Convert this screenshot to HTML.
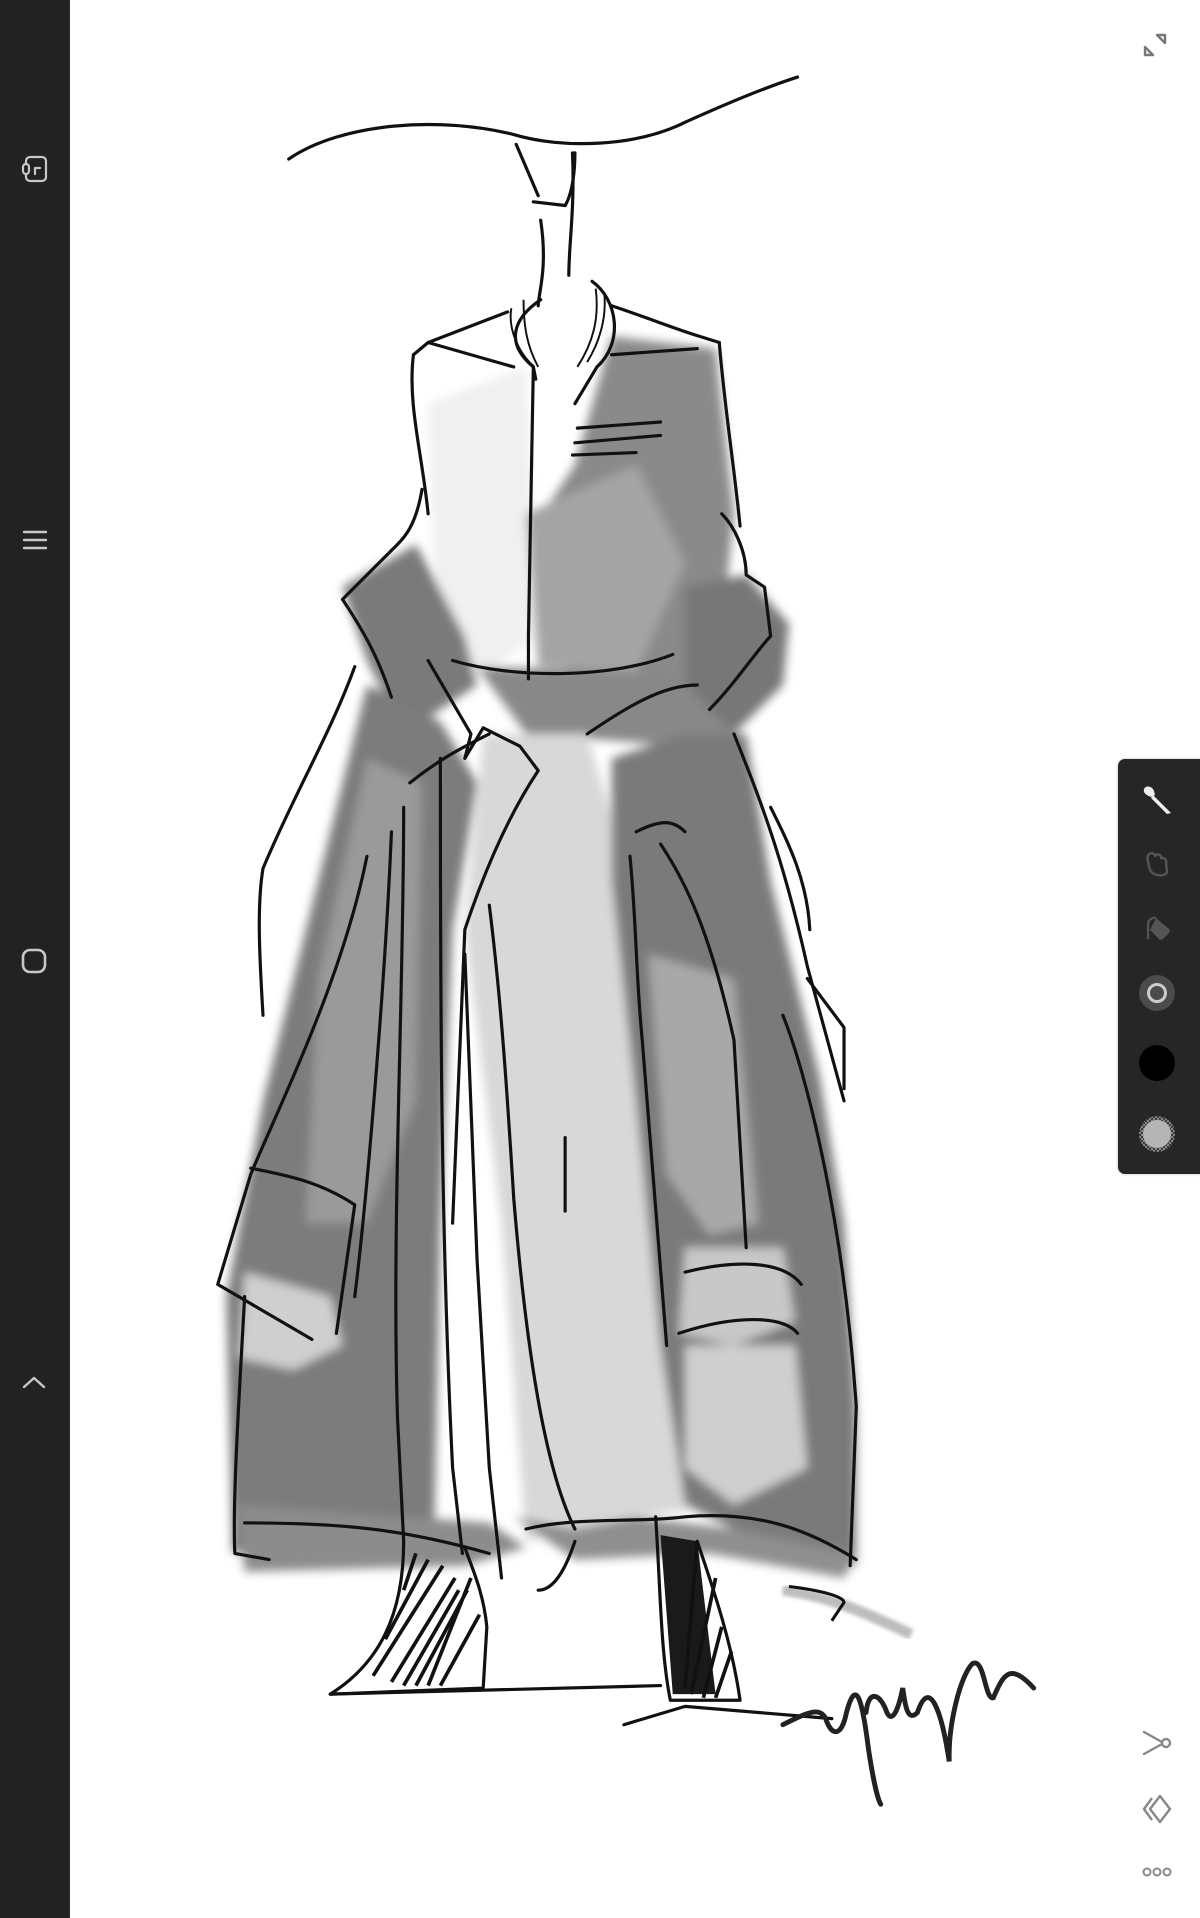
<!DOCTYPE html>
<html><head><meta charset="utf-8">
<style>
html,body{margin:0;padding:0;background:#fff;}
body{width:1200px;height:1918px;position:relative;overflow:hidden;font-family:"Liberation Sans",sans-serif;}
#side{position:absolute;left:0;top:0;width:69px;height:1918px;background:#222222;border-right:1px solid #2c2c2c;}
#art{position:absolute;left:0;top:0;width:1200px;height:1918px;}
#tb{position:absolute;left:1118px;top:759px;width:82px;height:415px;background:#262626;border-radius:7px 0 0 7px;box-shadow:0 0 3px rgba(0,0,0,.25);}
.ic{position:absolute;}
</style></head><body>
<svg id="art" viewBox="0 0 981 1568" preserveAspectRatio="none">
<defs><filter id="b"><feGaussianBlur stdDeviation="4"/></filter><filter id="b2"><feGaussianBlur stdDeviation="1.5"/></filter></defs>
<g filter="url(#b)">
<path d="M500,275 L585,285 L600,420 L590,520 L560,560 L470,555 L440,520 L430,440 L470,380 Z" fill="#8a8a8a"/>
<path d="M350,330 L430,300 L440,520 L390,555 L355,470 Z" fill="#f0f0f0"/>
<path d="M430,420 L520,380 L560,460 L520,550 L440,545 Z" fill="#a4a4a4"/>
<path d="M280,480 L340,445 L380,520 L390,560 L330,600 L300,540 Z" fill="#7a7a7a"/>
<path d="M560,480 L610,470 L645,510 L640,560 L600,600 L560,560 Z" fill="#777"/>
<path d="M390,545 L550,550 L600,600 L560,610 L430,600 Z" fill="#888"/>
<path d="M300,560 L360,590 L390,640 L370,760 L360,1000 L355,1250 L300,1255 L190,1270 L185,1060 L215,900 L260,720 Z" fill="#7c7c7c"/>
<path d="M300,620 L345,640 L340,900 L300,1000 L250,1000 L260,800 Z" fill="#9a9a9a"/>
<path d="M200,1040 L270,1060 L280,1100 L240,1120 L195,1110 Z" fill="#cfcfcf"/>
<path d="M395,600 L480,600 L510,700 L530,900 L560,1100 L600,1230 L520,1240 L430,1260 L410,1000 L380,760 Z" fill="#d8d8d8"/>
<path d="M500,620 L560,600 L610,600 L630,720 L670,880 L690,1000 L700,1150 L700,1280 L620,1260 L560,1230 L540,1100 L520,900 L500,720 Z" fill="#7a7a7a"/>
<path d="M530,780 L600,800 L620,1000 L580,1010 L545,960 Z" fill="#a8a8a8"/>
<path d="M560,1020 L640,1020 L650,1080 L600,1100 L555,1090 Z" fill="#c8c8c8"/>
<path d="M560,1100 L650,1100 L660,1200 L600,1230 L560,1200 Z" fill="#cfcfcf"/>
<path d="M195,1230 L400,1245 L430,1265 L380,1280 L200,1285 Z" fill="#8c8c8c"/>
<path d="M420,1240 L470,1250 L520,1240 L600,1250 L700,1270 L690,1290 L580,1270 L470,1275 Z" fill="#8f8f8f"/>
</g>
<g filter="url(#b2)"><path d="M640,1300 C680,1305 710,1320 745,1336" stroke="#bdbdbd" stroke-width="9" fill="none"/></g>
<g fill="none" stroke="#111" stroke-width="2.6" stroke-linecap="round" stroke-linejoin="round">
<path d="M236,130 C280,100 360,95 420,110 C460,122 520,120 560,100 C600,82 630,70 652,63"/>
<path d="M422,118 L440,160 M436,165 L462,168 C468,158 470,140 470,125"/>
<path d="M442,180 C448,220 440,240 440,250 M468,125 C470,170 465,200 465,225"/>
<path d="M442,245 C420,260 412,280 436,300 L438,310 M484,230 C505,245 510,280 488,300 L470,330"/>
<path d="M415,255 L350,280 L338,290 M500,250 C530,260 555,270 572,275 L588,280"/>
<path d="M338,290 C333,330 345,370 350,420 M588,280 C592,330 600,380 605,430"/>
<path d="M350,280 L420,300 M500,290 L570,285"/>
<path d="M436,300 L432,520 L432,555"/>
<path d="M472,350 L540,345 M470,362 L540,356 M468,372 L520,370"/>
<path d="M345,400 C340,430 330,440 325,445 L280,490 C300,520 310,540 320,570"/>
<path d="M590,420 C600,430 610,450 610,470 L625,480 L630,520 C620,530 600,560 580,580"/>
<path d="M370,540 C420,555 500,555 550,535"/>
<path d="M350,540 L385,600 L380,620 L395,595 L425,610 L440,630 C420,660 400,700 380,760 L370,1000"/>
<path d="M335,640 C360,620 380,610 400,600"/>
<path d="M480,600 C510,580 540,560 570,560"/>
<path d="M290,545 C270,600 240,650 215,710 C210,740 212,780 215,830"/>
<path d="M300,700 C280,800 230,900 205,960 L178,1050 L255,1095"/>
<path d="M205,955 C230,960 260,965 290,985 L275,1090"/>
<path d="M320,680 C315,800 300,980 290,1060"/>
<path d="M330,660 C330,820 320,1000 325,1160 L330,1260"/>
<path d="M360,620 C360,800 360,1000 370,1200 L378,1270"/>
<path d="M200,1060 C195,1150 190,1230 192,1270 L220,1275"/>
<path d="M400,740 C410,820 415,900 420,980 C430,1100 445,1200 470,1250"/>
<path d="M380,780 L390,1030 L400,1200 L410,1290"/>
<path d="M462,930 L462,990"/>
<path d="M520,680 C540,670 550,670 560,680 M515,700 C520,750 520,800 525,850 L545,1100"/>
<path d="M540,690 C560,720 580,760 600,850 L610,1020"/>
<path d="M600,600 C620,650 640,700 660,790 L690,900 M630,660 C645,690 660,720 662,760"/>
<path d="M560,1040 C600,1030 640,1030 655,1050 M555,1090 C600,1075 640,1075 652,1090"/>
<path d="M640,830 C660,880 690,1000 700,1150 L695,1280"/>
<path d="M660,800 L690,840 L690,890"/>
<path d="M200,1245 C280,1245 330,1250 400,1270"/>
<path d="M430,1250 C470,1240 520,1245 560,1240 C620,1235 660,1250 700,1275"/>
<path d="M330,1260 C330,1320 310,1360 270,1385 L395,1380 L398,1330 C395,1300 385,1280 380,1265"/>
<path d="M536,1240 C540,1300 540,1350 548,1390 L605,1390 C598,1340 580,1290 570,1260"/>
<path d="M270,1385 L540,1378 M510,1410 L560,1395 L680,1405"/>
<path d="M470,1260 C460,1290 450,1300 440,1300"/>
</g>
<g stroke="#111" stroke-width="3" fill="none">
<path d="M340,1270 L330,1300 M350,1275 L315,1340 M362,1280 L305,1370 M372,1290 L320,1375 M382,1300 L340,1378 M392,1320 L360,1378 M385,1290 L350,1378 M375,1300 L330,1378"/>
<path d="M540,1255 L570,1260 L585,1385 L550,1385 Z" fill="#1a1a1a" stroke="none"/>
<path d="M570,1260 L560,1380 M585,1290 L565,1385 M590,1330 L575,1388 M598,1350 L585,1388"/>
<path d="M418,252 C415,270 425,290 437,300 M428,245 C428,270 432,285 440,300 M494,240 C496,260 490,280 480,296 M487,236 C490,260 485,280 472,300" stroke-width="1.6"/>
</g>
<path d="M640,1410 C660,1400 670,1395 675,1405 C680,1420 688,1420 692,1400 C700,1370 705,1390 710,1430 C713,1450 717,1470 720,1475 M708,1400 C710,1380 720,1385 725,1400 C730,1410 735,1395 738,1380 C740,1395 742,1408 750,1400 C760,1370 770,1400 776,1440 C775,1410 785,1370 795,1360 C805,1355 805,1390 812,1388 C820,1370 825,1358 845,1380" stroke="#222" stroke-width="4" fill="none" stroke-linecap="round"/>
<path d="M645,1297 C670,1300 690,1305 690,1310 L680,1325" stroke="#111" stroke-width="2.5" fill="none"/>
</svg>

<div id="side">
<svg class="ic" style="left:20px;top:154px" width="30" height="30" viewBox="0 0 30 30" fill="none" stroke="#c8c8c8" stroke-width="2.2" stroke-linecap="round" stroke-linejoin="round"><rect x="6" y="3" width="20" height="24" rx="4"/><rect x="3" y="10" width="6" height="10" rx="3" fill="#222"/><path d="M15 20 V14 H20"/></svg>
<svg class="ic" style="left:22px;top:528px" width="26" height="24" viewBox="0 0 26 24" stroke="#c8c8c8" stroke-width="2.4" stroke-linecap="round"><path d="M2 4 H24 M2 12 H24 M2 20 H24"/></svg>
<svg class="ic" style="left:20px;top:947px" width="28" height="28" viewBox="0 0 28 28" fill="none" stroke="#c8c8c8" stroke-width="2.6"><rect x="3" y="3" width="22" height="22" rx="7"/></svg>
<svg class="ic" style="left:21px;top:1374px" width="26" height="16" viewBox="0 0 26 16" fill="none" stroke="#c8c8c8" stroke-width="2.4" stroke-linecap="round" stroke-linejoin="round"><path d="M3 13 L13 4 L23 13"/></svg>
</div>

<svg class="ic" style="left:1140px;top:30px" width="30" height="30" viewBox="0 0 30 30" fill="none" stroke="#777" stroke-width="2.4" stroke-linejoin="round"><path d="M17 5 H25 V13 Z"/><path d="M5 17 V25 H13 Z"/></svg>

<div id="tb">
<svg class="ic" style="left:22px;top:24px" width="36" height="36" viewBox="0 0 36 36"><path d="M4 6 C6 2 12 3 14 8 L15 12 L11 14 C6 12 3 10 4 6Z" fill="#eee"/><path d="M13 12 L31 30 L27 31 L11 15 Z" fill="#eee"/></svg>
<svg class="ic" style="left:22px;top:88px" width="36" height="36" viewBox="0 0 36 36" fill="none" stroke="#555" stroke-width="2.4" stroke-linejoin="round"><path d="M9 7 C12 5 15 7 15 9 C17 6 22 8 21 11 C24 10 27 13 26 16 L27 24 C27 28 22 29 17 28 C12 27 10 24 9 20 L8 14 C7 11 7 9 9 7Z"/></svg>
<svg class="ic" style="left:22px;top:152px" width="36" height="36" viewBox="0 0 36 36"><path d="M8 28 V14 C8 9 12 6 16 7" fill="none" stroke="#555" stroke-width="2.4"/><path d="M16 7 L29 18 C30 19 30 21 29 22 L23 28 C22 29 20 29 19 28 L10 19 Z" fill="#555"/></svg>
<svg class="ic" style="left:19px;top:214px" width="40" height="40" viewBox="0 0 40 40"><circle cx="20" cy="20" r="18" fill="#4b4b4b"/><circle cx="20" cy="20" r="8.5" fill="none" stroke="#ccc" stroke-width="3"/></svg>
<svg class="ic" style="left:19px;top:284px" width="40" height="40" viewBox="0 0 40 40"><circle cx="20" cy="20" r="18" fill="#000"/></svg>
<svg class="ic" style="left:19px;top:355px" width="40" height="40" viewBox="0 0 40 40"><defs><pattern id="ck" width="4" height="4" patternUnits="userSpaceOnUse"><rect width="4" height="4" fill="#3a3a3a"/><rect width="2" height="2" fill="#888"/><rect x="2" y="2" width="2" height="2" fill="#888"/></pattern></defs><circle cx="20" cy="20" r="18" fill="url(#ck)"/><circle cx="20" cy="20" r="14" fill="#b5b5b5"/></svg>
</div>

<svg class="ic" style="left:1140px;top:1728px" width="34" height="30" viewBox="0 0 34 30" fill="none" stroke="#888" stroke-width="2.4" stroke-linecap="round"><path d="M4 4 L22 14 M4 26 L22 16"/><circle cx="26" cy="15" r="4"/></svg>
<svg class="ic" style="left:1140px;top:1792px" width="34" height="34" viewBox="0 0 34 34" fill="none" stroke="#888" stroke-width="2.4" stroke-linejoin="round"><path d="M12 6 L4 17 L12 28"/><path d="M20 4 L30 17 L20 30 L10 17 Z"/></svg>
<svg class="ic" style="left:1142px;top:1866px" width="30" height="12" viewBox="0 0 30 12" fill="none" stroke="#888" stroke-width="2"><circle cx="5" cy="6" r="3.5"/><circle cx="15" cy="6" r="3.5"/><circle cx="25" cy="6" r="3.5"/></svg>
</body></html>
